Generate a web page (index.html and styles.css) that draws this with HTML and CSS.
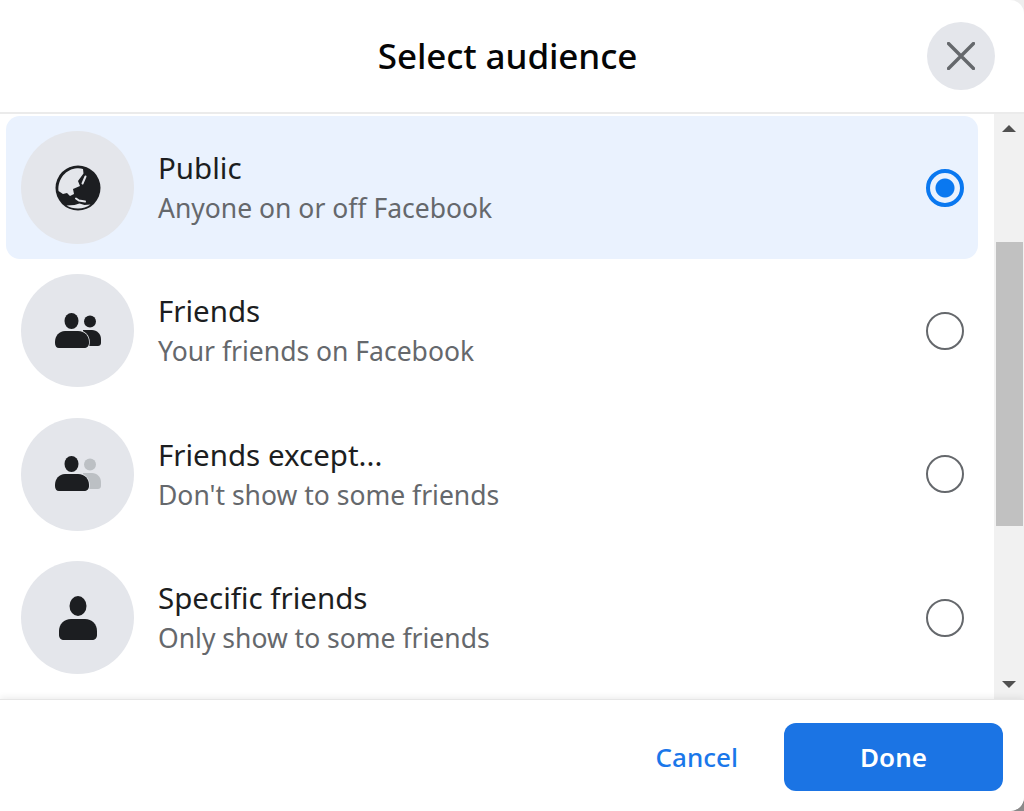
FILE: index.html
```html
<!DOCTYPE html>
<html lang="en">
<head>
    <meta charset="UTF-8">
    <meta name="viewport" content="width=device-width, initial-scale=1.0">
    <title>Select audience</title>
    <link rel="stylesheet" href="styles.css">
</head>
<body>
    <div class="dialog">
        <header class="dialog-header">
            <h1>Select audience</h1>
            <button class="close-button" aria-label="Close">
                <svg viewBox="0 0 28 28" width="28" height="28"><path d="M1.5 1.5 26.5 26.5M26.5 1.5 1.5 26.5" stroke="#65686c" stroke-width="3.4" stroke-linecap="round" fill="none"/></svg>
            </button>
        </header>

        <div class="dialog-body">
            <ul class="audience-list">
                <li class="audience-row selected">
                    <span class="icon-circle">
                        <svg viewBox="0 0 46 46" width="46" height="46">
                            <circle cx="23" cy="23" r="22.5" fill="#1c1e21"/>
                            <path fill="#e4e6eb" d="M3.500 26C2.500 14 11 4 22 3.300c2-.1 4.200 0 6 .7l.5 4.500L23 16l2 5-7 3 1 5-4 2-3-3-4 1z"/>
                            <path d="M30.500 11.500 27.500 18.500M21 33.500l3 2 6 1" stroke="#e4e6eb" stroke-width="2" stroke-linecap="round" fill="none"/>
                            <path fill="#e4e6eb" d="M11.500 40.500c3 2 7 3 11.500 3 5 0 9-1.500 12.500-4l-6 .5-5-1.500-5 1.500z"/>
                        </svg>
                    </span>
                    <span class="audience-text">
                        <span class="audience-title">Public</span>
                        <span class="audience-desc">Anyone on or off Facebook</span>
                    </span>
                    <span class="radio checked"></span>
                </li>
                <li class="audience-row">
                    <span class="icon-circle">
                        <svg viewBox="0 0 46 36" width="46" height="36">
                            <circle cx="35" cy="8.500" r="6" fill="#1c1e21"/>
                            <path fill="#1c1e21" d="M28 17h9c5 0 9 4 9 9v4c0 2-1.500 3-3 3H28z"/>
                            <ellipse cx="16.500" cy="8" rx="7" ry="8" fill="#1c1e21"/>
                            <path fill="#1c1e21" stroke="#e4e6eb" stroke-width="1.500" paint-order="stroke" d="M10 18h13c7 0 11 5 11 11v1c0 3-2 5-5 5H4c-2.500 0-4-2-4-5v-1c0-6 4-11 10-11z"/>
                        </svg>
                    </span>
                    <span class="audience-text">
                        <span class="audience-title">Friends</span>
                        <span class="audience-desc">Your friends on Facebook</span>
                    </span>
                    <span class="radio"></span>
                </li>
                <li class="audience-row">
                    <span class="icon-circle">
                        <svg viewBox="0 0 46 36" width="46" height="36">
                            <circle cx="35" cy="8.500" r="6" fill="#bcc0c4"/>
                            <path fill="#bcc0c4" d="M28 17h9c5 0 9 4 9 9v4c0 2-1.500 3-3 3H28z"/>
                            <ellipse cx="16.500" cy="8" rx="7" ry="8" fill="#1c1e21"/>
                            <path fill="#1c1e21" stroke="#e4e6eb" stroke-width="1.500" paint-order="stroke" d="M10 18h13c7 0 11 5 11 11v1c0 3-2 5-5 5H4c-2.500 0-4-2-4-5v-1c0-6 4-11 10-11z"/>
                        </svg>
                    </span>
                    <span class="audience-text">
                        <span class="audience-title">Friends except...</span>
                        <span class="audience-desc">Don't show to some friends</span>
                    </span>
                    <span class="radio"></span>
                </li>
                <li class="audience-row">
                    <span class="icon-circle">
                        <svg viewBox="0 0 38 44" width="38" height="44"><ellipse cx="19" cy="10" rx="8.500" ry="10" fill="#1c1e21"/><path fill="#1c1e21" d="M12 23h14c7 0 12 5 12 12v4c0 3-2 5-5 5H5c-3 0-5-2-5-5v-4c0-7 5-12 12-12z"/></svg>
                    </span>
                    <span class="audience-text">
                        <span class="audience-title">Specific friends</span>
                        <span class="audience-desc">Only show to some friends</span>
                    </span>
                    <span class="radio"></span>
                </li>
            </ul>
            <div class="scrollbar">
                <span class="arrow-up"></span>
                <div class="track"><div class="thumb"></div></div>
                <span class="arrow-down"></span>
            </div>
        </div>

        <footer class="dialog-footer">
            <button class="cancel-button">Cancel</button>
            <button class="done-button">Done</button>
        </footer>
    </div>
</body>
</html>
```

FILE: styles.css
```css
* {
    box-sizing: border-box;
}
html, body {
    height: 100%;
}
body {
    margin: 0;
    background: linear-gradient(#eeeeee, #eeeeee 50%, #8c8c8c 50%);
    font-family: "Noto Sans", "Open Sans", sans-serif;
    color: #1c1e21;
    overflow: hidden;
}
.dialog {
    height: 811px;
    display: flex;
    flex-direction: column;
    background: white;
    border-radius: 0 14px 14px 0;
}
.dialog-header {
    height: 114px;
    flex: none;
    display: flex;
    align-items: center;
    justify-content: center;
    position: relative;
    padding: 0 9px 2px 0;
    border-bottom: 2px solid #ebebeb;
}
h1 {
    margin: 0;
    font-size: 35px;
    font-weight: 500;
    letter-spacing: -0.1px;
    color: #050505;
}
.close-button {
    position: absolute;
    left: 927px;
    top: 22px;
    width: 68px;
    height: 68px;
    border: none;
    border-radius: 50%;
    background: #e4e6eb;
    display: flex;
    align-items: center;
    justify-content: center;
    padding: 0;
}
.dialog-body {
    height: 585px;
    flex: none;
    display: flex;
}
.audience-list {
    flex: 1;
    list-style: none;
    margin: 0;
    padding: 2px 16px 0 6px;
}
.audience-row {
    height: 143.300px;
    display: flex;
    align-items: center;
    padding: 0 14px 0 15px;
    border-radius: 14px;
}
.audience-row.selected {
    background: #eaf2fe;
}
.icon-circle {
    width: 113px;
    height: 113px;
    flex: none;
    border-radius: 50%;
    background: #e4e6eb;
    display: flex;
    align-items: center;
    justify-content: center;
}
.audience-text {
    flex: 1;
    display: flex;
    flex-direction: column;
    margin-left: 24px;
    padding-top: 1px;
}
.audience-title {
    font-size: 29.500px;
    line-height: 40px;
    color: #1c1e21;
}
.audience-desc {
    font-size: 26.500px;
    line-height: 40px;
    color: #65686c;
}
.radio {
    width: 38px;
    height: 38px;
    flex: none;
    border-radius: 50%;
    border: 2.500px solid #65686c;
}
.radio.checked {
    border: 4px solid #0a78f0;
    background: radial-gradient(circle, #0a78f0 0, #0a78f0 9px, transparent 10px);
}
.scrollbar {
    width: 30px;
    flex: none;
    background: #f1f1f1;
    display: flex;
    flex-direction: column;
    align-items: center;
}
.arrow-up, .arrow-down {
    width: 0;
    height: 0;
    flex: none;
    border-left: 7px solid transparent;
    border-right: 7px solid transparent;
}
.arrow-up {
    margin-top: 11px;
    border-bottom: 7px solid #505050;
}
.arrow-down {
    margin-bottom: 11px;
    border-top: 7px solid #505050;
}
.track {
    flex: 1;
    width: 100%;
    padding: 110px 1px 0 2px;
}
.thumb {
    height: 284px;
    background: #c1c1c1;
}
.dialog-footer {
    flex: 1;
    display: flex;
    justify-content: flex-end;
    align-items: center;
    padding: 2px 21px 0 0;
    gap: 46px;
    position: relative;
    background: white;
    border-radius: 0 0 14px 0;
    border-top: 1px solid #e6e6e6;
    box-shadow: 0 -2px 6px rgba(0, 0, 0, 0.07);
}
.cancel-button, .done-button {
    border: none;
    padding: 0;
    font-family: inherit;
    font-size: 26px;
    font-weight: 500;
}
.cancel-button {
    background: none;
    color: #1a77ea;
}
.done-button {
    width: 219px;
    height: 68px;
    border-radius: 12px;
    background: #1b74e4;
    color: white;
    font-weight: 600;
}
```
